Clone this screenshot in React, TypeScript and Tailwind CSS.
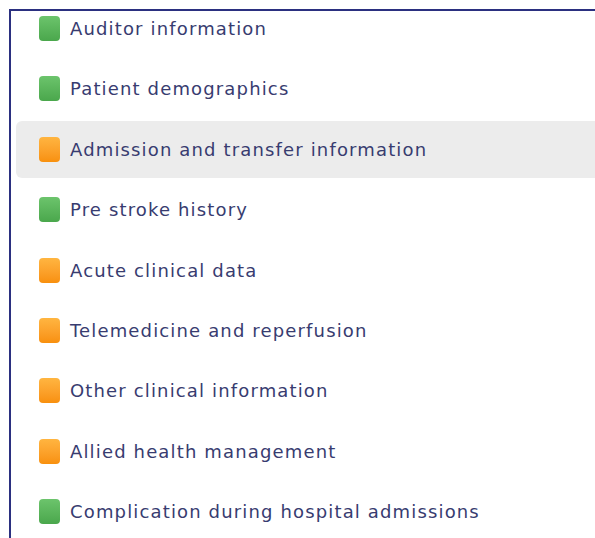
const sections = [
  { label: "Auditor information", status: "done" },
  { label: "Patient demographics", status: "done" },
  { label: "Admission and transfer information", status: "partial", active: true },
  { label: "Pre stroke history", status: "done" },
  { label: "Acute clinical data", status: "partial" },
  { label: "Telemedicine and reperfusion", status: "partial" },
  { label: "Other clinical information", status: "partial" },
  { label: "Allied health management", status: "partial" },
  { label: "Complication during hospital admissions", status: "done" },
];

function StatusDot({ status }: { status: string }) {
  return status === "done" ? (
    <span className="h-[25px] w-[21px] shrink-0 rounded-[4px] bg-gradient-to-b from-[#6cc46c] to-[#4aa74c]" />
  ) : (
    <span className="h-[25px] w-[21px] shrink-0 rounded-[4px] bg-gradient-to-b from-[#ffb540] to-[#f8900c]" />
  );
}

export default function App() {
  return (
    <div className="h-[538px] w-[595px] overflow-hidden bg-white pl-[9px] pt-[9px]">
      <div className="h-full overflow-hidden border-l-2 border-t-2 border-[#2b3080]">
        <ul className="-mt-[11px] flex flex-col gap-[3.4px] pl-[5px]">
          {sections.map((s) => (
            <li
              key={s.label}
              className={`flex h-[57px] items-center gap-[10px] rounded-l-md pl-[23px] ${
                s.active ? "bg-[#ececec]" : ""
              }`}
            >
              <StatusDot status={s.status} />
              <span
                className="text-[18px] tracking-[1.15px] text-[#383c70]"
                style={{ fontFamily: '"DejaVu Sans", sans-serif' }}
              >
                {s.label}
              </span>
            </li>
          ))}
        </ul>
      </div>
    </div>
  );
}
